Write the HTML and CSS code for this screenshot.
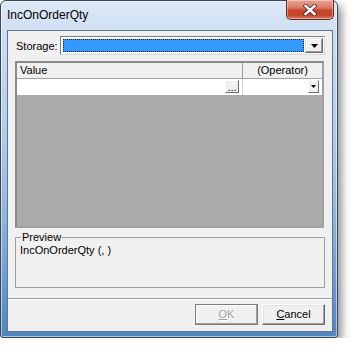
FILE: index.html
```html
<!DOCTYPE html>
<html>
<head>
<meta charset="utf-8">
<link rel="stylesheet" href="styles.css">
</head>
<body>
<div class="window">
  <div class="titlebar">
    <span class="title">IncOnOrderQty</span>
    <div class="close">
      <svg width="14" height="12" viewBox="0 0 14 12">
        <path d="M2.5 2 L11.5 10 M11.5 2 L2.5 10" stroke="#4a2a24" stroke-width="4.2" stroke-linecap="square"/>
        <path d="M2.5 2 L11.5 10 M11.5 2 L2.5 10" stroke="#ffffff" stroke-width="2.4" stroke-linecap="square"/>
      </svg>
    </div>
  </div>
  <div class="client">
    <div class="main">
      <div class="storage-row">
        <span class="label">Storage:</span>
        <div class="combo">
          <div class="combo-field"></div>
          <div class="combo-btn">
            <svg width="7" height="4" viewBox="0 0 7 4"><polygon points="0,0 7,0 3.5,4" fill="#000"/></svg>
          </div>
        </div>
      </div>
      <div class="grid">
        <div class="grid-head">
          <div class="col1 head-cell">Value</div>
          <div class="col2 head-cell center">(Operator)</div>
        </div>
        <div class="grid-row">
          <div class="col1 cell"><span class="ell-btn">...</span></div>
          <div class="col2 cell"><span class="dd-btn"><svg width="5" height="3" viewBox="0 0 5 3"><polygon points="0,0 5,0 2.5,3" fill="#000"/></svg></span></div>
        </div>
        <div class="grid-empty"></div>
      </div>
      <fieldset class="preview">
        <legend>Preview</legend>
        <div class="preview-text">IncOnOrderQty (, )</div>
      </fieldset>
    </div>
    <div class="footer">
      <div class="btn disabled"><span><u>O</u>K</span></div>
      <div class="btn"><span><u>C</u>ancel</span></div>
    </div>
  </div>
</div>
</body>
</html>
```
FILE: styles.css
```css
html, body {
  margin: 0;
  padding: 0;
  background: #ffffff;
}
body {
  font-family: "Liberation Sans", Arial, sans-serif;
  font-size: 11px;
  color: #000;
}
.window {
  box-sizing: border-box;
  width: 338px;
  height: 338px;
  border: 1px solid #34465a;
  border-radius: 6px 6px 3px 3px;
  background: linear-gradient(to bottom, #dde9f6 0%, #c9dcf1 12%, #b7cfea 35%, #98b9df 60%, #6d9dd0 82%, #4f86c0 100%);
  box-shadow: 4px 5px 8px rgba(0, 0, 0, 0.42), inset 0 0 0 1px rgba(255, 255, 255, 0.55);
  display: flex;
  flex-direction: column;
}
.titlebar {
  height: 29px;
  display: flex;
  justify-content: space-between;
  align-items: flex-start;
  padding: 0 3px 0 6px;
}
.title {
  font-size: 12px;
  line-height: 14px;
  margin-top: 7px;
  color: #000;
}
.close {
  box-sizing: border-box;
  width: 48px;
  height: 20px;
  margin-top: -1px;
  border: 1px solid #6e2a1e;
  border-top: none;
  border-radius: 0 0 5px 5px;
  background: linear-gradient(to bottom, #e8a597 0%, #db7a66 40%, #c8452b 55%, #c2442c 80%, #d8826a 100%);
  box-shadow: inset 0 0 0 1px rgba(255, 255, 255, 0.35);
  display: flex;
  align-items: center;
  justify-content: center;
}
.client {
  box-sizing: border-box;
  height: 302px;
  margin: 0 4px 0 6px;
  border: 1px solid #62778f;
  background: #f0f0f0;
  display: flex;
  flex-direction: column;
}
.main {
  flex: 1;
  padding: 5px 7px 0 7px;
  display: flex;
  flex-direction: column;
}
.storage-row {
  display: flex;
  align-items: center;
  height: 19px;
}
.label {
  width: 44px;
  padding-left: 1px;
}
.combo {
  flex: 1;
  box-sizing: border-box;
  height: 19px;
  border: 1px solid #7f7f7f;
  border-right-color: #d8d8d8;
  border-bottom-color: #d8d8d8;
  background: #fff;
  padding: 1px;
  display: flex;
  align-items: stretch;
}
.combo-field {
  flex: 1;
  box-sizing: border-box;
  margin: 1px 1px 1px 1px;
  background: #3399ff;
  border: 1px dotted #222;
}
.combo-btn {
  box-sizing: border-box;
  width: 18px;
  background: #f0f0f0;
  border: 1px solid;
  border-color: #e3e3e3 #696969 #696969 #e3e3e3;
  box-shadow: inset -1px -1px 0 #a0a0a0, inset 1px 1px 0 #fff;
  display: flex;
  align-items: center;
  justify-content: center;
}
.grid {
  margin-top: 6px;
  margin-right: 1px;
  box-sizing: border-box;
  height: 167px;
  border: 2px solid;
  border-color: #8a8a8a #a0a0a0 #a0a0a0 #8a8a8a;
  display: flex;
  flex-direction: column;
}
.grid-head {
  height: 15px;
  display: flex;
  background: #f0f0f0;
  border-bottom: 1px solid #a0a0a0;
}
.col1 {
  width: 226px;
  border-right: 1px solid #a0a0a0;
}
.col2 {
  flex: 1;
}
.head-cell {
  line-height: 15px;
  padding-left: 3px;
  box-sizing: border-box;
}
.head-cell.center {
  text-align: center;
  padding-left: 0;
}
.grid-row {
  height: 16px;
  display: flex;
  background: #fff;
}
.grid-row .col1 {
  border-right-color: #d0d0d0;
}
.cell {
  display: flex;
  justify-content: flex-end;
  align-items: flex-start;
  padding-top: 1px;
  box-sizing: border-box;
}
.col1.cell {
  padding-right: 3px;
}
.col2.cell {
  padding-right: 3px;
}
.ell-btn {
  box-sizing: border-box;
  width: 14px;
  height: 13px;
  background: #f0f0f0;
  border: 1px solid;
  border-color: #fff #696969 #696969 #fff;
  font-size: 11px;
  line-height: 9px;
  text-align: center;
  display: flex;
  align-items: flex-end;
  justify-content: center;
  color: #000;
}
.dd-btn {
  box-sizing: border-box;
  width: 11px;
  height: 13px;
  background: #f0f0f0;
  border: 1px solid;
  border-color: #fff #696969 #696969 #fff;
  display: flex;
  align-items: center;
  justify-content: center;
}
.grid-empty {
  flex: 1;
  background: #ababab;
}
.preview {
  box-sizing: border-box;
  margin: 3px 0 0 0;
  height: 57px;
  padding: 0 4px;
  border: 1px solid #a0a0a0;
  min-width: 0;
}
.preview legend {
  padding: 0 1px;
  margin-left: 1px;
  line-height: 13px;
}
.preview-text {
  line-height: 13px;
}
.footer {
  height: 33px;
  box-sizing: border-box;
  border-top: 1px solid #a0a0a0;
  box-shadow: inset 0 1px 0 #fff;
  padding: 5px 7px 0 7px;
  display: flex;
  justify-content: flex-end;
  align-items: flex-start;
  gap: 4px;
}
.btn {
  box-sizing: border-box;
  width: 63px;
  height: 21px;
  background: #f0f0f0;
  border: 1px solid;
  border-color: #fff #696969 #696969 #fff;
  box-shadow: inset -1px -1px 0 #a0a0a0, inset 1px 1px 0 #e3e3e3;
  display: flex;
  align-items: center;
  justify-content: center;
  line-height: 13px;
}
.btn.disabled {
  border-color: #7a7a7a;
  box-shadow: inset -1px -1px 0 #a0a0a0, inset 1px 1px 0 #fff;
  color: #a0a0a0;
  text-shadow: 1px 1px 0 #fff;
}
```
